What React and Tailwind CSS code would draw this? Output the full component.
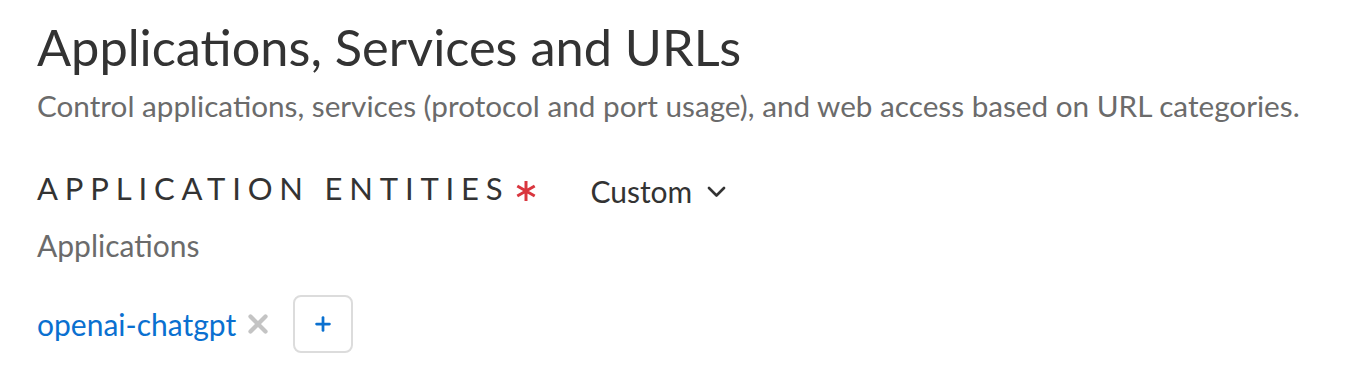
import { X, Plus } from 'lucide-react';

const App = () => {
  return (
    <div className="w-[1353px] h-[380px] bg-white px-[37px] pt-[17px] font-['Lato',sans-serif]">
      {/* Header */}
      <h1 className="text-[50.5px] leading-[60px] text-[#333333]">Applications, Services and URLs</h1>
      <p className="mt-[11px] text-[29.7px] leading-[36px] text-[#6b6b6b]">
        Control applications, services (protocol and port usage), and web access based on URL categories.
      </p>

      {/* Section */}
      <div className="mt-[44px] flex items-center h-[40px]">
        <h2 className="text-[31px] leading-[40px] tracking-[0.22em] text-[#333333]">APPLICATION ENTITIES</h2>
        <svg width="22" height="20" viewBox="0 0 22 20" className="ml-[6px] mt-[6px] text-[#d9363e]" fill="none" stroke="currentColor" strokeWidth="3">
          <path d="M11 0v20M2.3 5l17.4 10M2.3 15l17.4-10" />
        </svg>
        <button className="ml-[53px] mt-[6px] flex items-center gap-[15px] text-[30px] leading-[40px] text-[#333333]">
          Custom
          <svg width="19" height="11" viewBox="0 0 19 11" fill="none" stroke="currentColor" strokeWidth="2.6" strokeLinecap="round" strokeLinejoin="round" className="mt-[1px]">
            <path d="M2 2l7.5 7.5L17 2" />
          </svg>
        </button>
      </div>
      <div className="mt-[19px] text-[30px] leading-[36px] text-[#6b6b6b]">Applications</div>

      <div className="mt-[32px] flex items-center">
        <span className="text-[30px] leading-[36px] text-[#0a70d0]">openai-chatgpt</span>
        <X size={30} strokeWidth={3.4} className="ml-[7px] text-[#c4c4c4]" />
        <button className="ml-[20px] w-[60px] h-[58px] rounded-[8px] border-2 border-[#dcdcdc] flex items-center justify-center text-[#0a70d0]">
          <Plus size={22} strokeWidth={3} />
        </button>
      </div>
    </div>
  );
};

export default App;
